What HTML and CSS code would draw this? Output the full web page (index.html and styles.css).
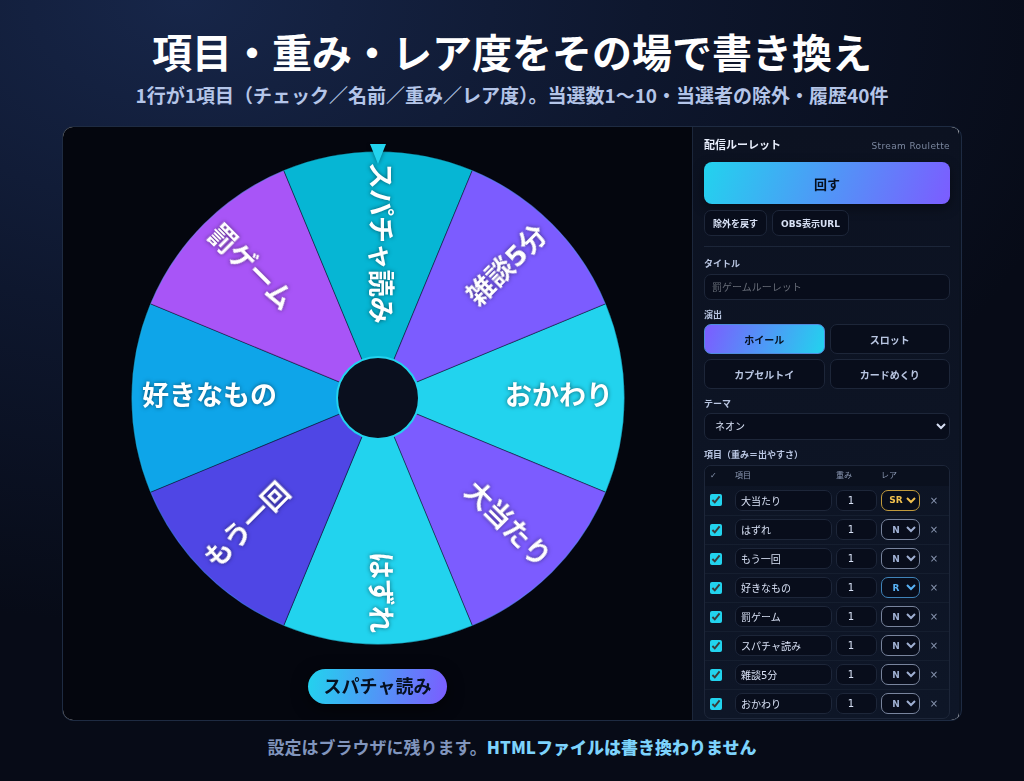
FILE: index.html
```
<!DOCTYPE html>
<html lang="ja">
<head>
    <meta charset="UTF-8">
    <meta name="viewport" content="width=device-width, initial-scale=1.0">
    <title>配信ルーレット</title>
    <link rel="stylesheet" href="styles.css">
</head>
<body>
    <header class="hero">
        <h1>項目・重み・レア度をその場で書き換え</h1>
        <p>1行が1項目（チェック／名前／重み／レア度）。当選数1〜10・当選者の除外・履歴40件</p>
    </header>

    <main class="card">
        <div class="app">
            <section class="stage">
                <svg class="wheel" viewBox="-250 -256 500 506" role="img" aria-label="ルーレット">
                    <defs>
                        <path id="slice" d="M0 0L227.7 -94.3A246.5 246.5 0 0 1 227.7 94.3Z"/>
                    </defs>
                    <g class="slices">
                        <use href="#slice" fill="#22d3ee"/>
                        <use href="#slice" fill="#7c5cff" transform="rotate(45)"/>
                        <use href="#slice" fill="#22d3ee" transform="rotate(90)"/>
                        <use href="#slice" fill="#4f46e5" transform="rotate(135)"/>
                        <use href="#slice" fill="#0ea5e9" transform="rotate(180)"/>
                        <use href="#slice" fill="#a855f7" transform="rotate(225)"/>
                        <use href="#slice" fill="#06b6d4" transform="rotate(270)"/>
                        <use href="#slice" fill="#7c5cff" transform="rotate(315)"/>
                    </g>
                    <circle class="rim" r="246"/>
                    <g class="names">
                        <text x="235" y="7" text-anchor="end">おかわり</text>
                        <text x="235" y="7" text-anchor="end" transform="rotate(45)">大当たり</text>
                        <text x="235" y="7" text-anchor="end" transform="rotate(90)">はずれ</text>
                        <text x="-236" y="7" transform="rotate(-45)">もう一回</text>
                        <text x="-236" y="7">好きなもの</text>
                        <text x="-236" y="7" transform="rotate(45)">罰ゲーム</text>
                        <text x="-236" y="7" transform="rotate(90)">スパチャ読み</text>
                        <text x="235" y="7" text-anchor="end" transform="rotate(-45)">雑談5分</text>
                    </g>
                    <circle class="hub" r="41"/>
                    <path class="pointer" d="M-8 -254H8L0 -234Z"/>
                </svg>
                <div class="result">スパチャ読み</div>
            </section>

            <aside class="panel">
                <div class="panel-head">
                    <h2>配信ルーレット</h2>
                    <span>Stream Roulette</span>
                </div>
                <button class="spin" type="button">回す</button>
                <div class="tools">
                    <button type="button">除外を戻す</button>
                    <button type="button">OBS表示URL</button>
                </div>

                <label class="label" for="title">タイトル</label>
                <input class="field" id="title" type="text" placeholder="罰ゲームルーレット">

                <div class="label" id="mode-label">演出</div>
                <div class="modes" role="group" aria-labelledby="mode-label">
                    <button class="active" type="button">ホイール</button>
                    <button type="button">スロット</button>
                    <button type="button">カプセルトイ</button>
                    <button type="button">カードめくり</button>
                </div>

                <label class="label" for="theme">テーマ</label>
                <select class="field theme" id="theme">
                    <option>ネオン</option>
                </select>

                <div class="label">項目（重み＝出やすさ）</div>
                <div class="items">
                    <table>
                        <thead>
                            <tr><th class="c-on">✓</th><th class="c-name">項目</th><th class="c-weight">重み</th><th class="c-rare">レア</th><th></th></tr>
                        </thead>
                        <tbody>
                            <tr>
                                <td><input type="checkbox" aria-label="有効" checked></td>
                                <td><input type="text" aria-label="項目" value="大当たり"></td>
                                <td><input class="weight" type="text" aria-label="重み" value="1"></td>
                                <td><select class="sr" aria-label="レア"><option>SR</option></select></td>
                                <td><button type="button" aria-label="削除">×</button></td>
                            </tr>
                            <tr>
                                <td><input type="checkbox" aria-label="有効" checked></td>
                                <td><input type="text" aria-label="項目" value="はずれ"></td>
                                <td><input class="weight" type="text" aria-label="重み" value="1"></td>
                                <td><select aria-label="レア"><option>N</option></select></td>
                                <td><button type="button" aria-label="削除">×</button></td>
                            </tr>
                            <tr>
                                <td><input type="checkbox" aria-label="有効" checked></td>
                                <td><input type="text" aria-label="項目" value="もう一回"></td>
                                <td><input class="weight" type="text" aria-label="重み" value="1"></td>
                                <td><select aria-label="レア"><option>N</option></select></td>
                                <td><button type="button" aria-label="削除">×</button></td>
                            </tr>
                            <tr>
                                <td><input type="checkbox" aria-label="有効" checked></td>
                                <td><input type="text" aria-label="項目" value="好きなもの"></td>
                                <td><input class="weight" type="text" aria-label="重み" value="1"></td>
                                <td><select class="r" aria-label="レア"><option>R</option></select></td>
                                <td><button type="button" aria-label="削除">×</button></td>
                            </tr>
                            <tr>
                                <td><input type="checkbox" aria-label="有効" checked></td>
                                <td><input type="text" aria-label="項目" value="罰ゲーム"></td>
                                <td><input class="weight" type="text" aria-label="重み" value="1"></td>
                                <td><select aria-label="レア"><option>N</option></select></td>
                                <td><button type="button" aria-label="削除">×</button></td>
                            </tr>
                            <tr>
                                <td><input type="checkbox" aria-label="有効" checked></td>
                                <td><input type="text" aria-label="項目" value="スパチャ読み"></td>
                                <td><input class="weight" type="text" aria-label="重み" value="1"></td>
                                <td><select aria-label="レア"><option>N</option></select></td>
                                <td><button type="button" aria-label="削除">×</button></td>
                            </tr>
                            <tr>
                                <td><input type="checkbox" aria-label="有効" checked></td>
                                <td><input type="text" aria-label="項目" value="雑談5分"></td>
                                <td><input class="weight" type="text" aria-label="重み" value="1"></td>
                                <td><select aria-label="レア"><option>N</option></select></td>
                                <td><button type="button" aria-label="削除">×</button></td>
                            </tr>
                            <tr>
                                <td><input type="checkbox" aria-label="有効" checked></td>
                                <td><input type="text" aria-label="項目" value="おかわり"></td>
                                <td><input class="weight" type="text" aria-label="重み" value="1"></td>
                                <td><select aria-label="レア"><option>N</option></select></td>
                                <td><button type="button" aria-label="削除">×</button></td>
                            </tr>
                        </tbody>
                    </table>
                </div>
            </aside>
        </div>
    </main>

    <footer class="note">設定はブラウザに残ります。<strong>HTMLファイルは書き換わりません</strong></footer>
</body>
</html>
```
FILE: styles.css
```
* {
    box-sizing: border-box;
}

body {
    margin: 0;
    min-height: 100vh;
    padding: 24px 62px 0;
    background: radial-gradient(ellipse 90% 80% at 18% 0%, #172649 0%, #0e172e 50%, #070b17 100%) #070b17;
    font-family: "Noto Sans CJK JP", sans-serif;
    color: #e8eefc;
}

h1, h2, p {
    margin: 0;
}

.hero {
    text-align: center;
    font-weight: 700;
}

.hero h1 {
    margin-bottom: 2px;
    font-size: 40px;
    line-height: 54px;
    color: #fff;
}

.hero p {
    font-size: 19px;
    line-height: 30px;
    color: #b4c5e8;
}

.card {
    margin-top: 16px;
    padding-right: 2px;
    border: 1px solid #1e2b42;
    border-radius: 11px;
    overflow: hidden;
    background: #0b1220;
}

/* app window */
.app {
    display: grid;
    grid-template-columns: 1fr 267px;
    background: #fff;
    font-family: "DejaVu Sans", "Noto Sans CJK JP", sans-serif;
}

.stage {
    display: flex;
    flex-direction: column;
    align-items: center;
    padding-top: 15px;
    background: #04060e;
}

.wheel {
    width: 100%;
    max-width: 500px;
}

.slices use {
    stroke: rgba(5, 8, 20, 0.4);
    stroke-width: 1;
}

.rim {
    fill: none;
    stroke: #22d3ee;
    stroke-opacity: 0.3;
}

.names {
    font-size: 27px;
    font-weight: 700;
    fill: #fff;
    filter: drop-shadow(0 0 2px rgba(0, 0, 0, 0.5));
}

.hub {
    fill: #0a0f1e;
    stroke: #22d3ee;
    stroke-width: 2;
}

.pointer {
    fill: #22d3ee;
    filter: drop-shadow(0 1px 2px rgba(0, 0, 0, 0.4));
}

.result {
    margin-top: 21px;
    padding: 0 16px;
    border-radius: 18px;
    background: linear-gradient(100deg, #22d3ee, #7c5cff);
    box-shadow: 0 4px 16px rgba(0, 0, 0, 0.6);
    font-size: 18px;
    font-weight: 700;
    line-height: 35px;
    color: #06101f;
}

/* settings panel */
.panel {
    padding: 11px 9px 1px 11px;
    border-left: 1px solid #1c273b;
    border-radius: 0 7px 7px 0;
    background: linear-gradient(#0c1221, #0e1627);
}

.panel button,
.panel input,
.panel select {
    margin: 0;
    border: 1px solid #1d2639;
    background: #080d1b;
    font-family: inherit;
    font-size: 10px;
    color: #d8e1f5;
}

.panel-head {
    display: flex;
    justify-content: space-between;
    align-items: center;
    height: 16px;
}

.panel-head h2 {
    font-size: 11px;
    line-height: 16px;
}

.panel-head span {
    font-size: 9px;
    letter-spacing: 0.04em;
    color: #7b879f;
}

.panel .spin {
    display: block;
    width: 100%;
    height: 42px;
    margin-top: 8px;
    border: 0;
    border-radius: 8px;
    background: linear-gradient(110deg, #22d3ee, #7c5cff);
    box-shadow: 0 4px 12px rgba(0, 0, 0, 0.4);
    font-size: 13px;
    font-weight: 700;
    color: #06101f;
}

.tools {
    display: flex;
    gap: 5px;
    padding: 6px 0 10px;
    border-bottom: 1px solid #1c2639;
}

.panel .tools button {
    height: 26px;
    padding: 0 8px;
    border-radius: 7px;
    font-size: 9px;
    font-weight: 700;
}

.label {
    display: block;
    margin-top: 7px;
    font-size: 9px;
    font-weight: 700;
    line-height: 16px;
    color: #b9c6e2;
}

.tools + .label {
    margin-top: 9px;
}

.panel .field {
    display: block;
    width: 100%;
    height: 26px;
    margin-top: 2px;
    padding: 0 7px;
    border-radius: 7px;
}

.field::placeholder {
    color: #686d78;
}

.panel .theme {
    height: 27px;
    margin-top: 1px;
    padding: 0 0 0 6px;
}

.modes {
    display: grid;
    grid-template-columns: 1fr 1fr;
    gap: 5px;
    margin-top: 1px;
}

.panel .modes button {
    height: 30px;
    border-radius: 7px;
    font-weight: 700;
    color: #b9c6e2;
}

.panel .modes .active {
    border-color: #4f8bdc;
    background: linear-gradient(110deg, #7c5cff, #22d3ee);
    color: #06101f;
}

/* item list */
.items {
    margin-top: 2px;
    border: 1px solid #1d2639;
    border-radius: 7px;
    overflow: hidden;
}

.items table {
    width: 100%;
    table-layout: fixed;
    border-collapse: collapse;
}

.items th {
    height: 20px;
    padding: 0 2px;
    background: #0a101e;
    font-size: 8px;
    font-weight: 400;
    line-height: 12px;
    text-align: left;
    color: #8b98b3;
}

.items .c-on {
    width: 28px;
    padding-left: 5px;
}

.items .c-name {
    width: 101px;
}

.items .c-weight {
    width: 45px;
}

.items .c-rare {
    width: 43px;
}

.items td {
    height: 29px;
    padding: 0 2px;
    font-size: 10px;
    line-height: 1;
}

.items tr + tr td {
    border-top: 1px solid #151e2f;
}

.items td > * {
    display: block;
}

.items input[type="checkbox"] {
    width: 12px;
    height: 12px;
    margin-left: 3px;
    accent-color: #22d3ee;
}

.items input[type="text"],
.items select {
    width: 100%;
    height: 21px;
    padding: 0 5px;
    border-radius: 7px;
}

.items input.weight[type="text"] {
    padding-right: 16px;
    text-align: center;
}

.panel .items select {
    padding: 0 0 0 3px;
    border-color: #78849d;
    font-size: 9px;
    font-weight: 700;
    text-align: center;
    color: #9fb0d3;
}

.panel .items .sr {
    border-color: #c09a3c;
    color: #f2c14e;
}

.panel .items .r {
    border-color: #3f83b8;
    color: #58b2f5;
}

.panel .items button {
    width: 20px;
    padding: 0;
    border: 0;
    background: none;
    color: #8b98b3;
}

.note {
    padding: 11px 0;
    text-align: center;
    font-size: 17px;
    font-weight: 700;
    line-height: 30px;
    color: #8195bd;
}

.note strong {
    color: #7dd3fc;
}
```
